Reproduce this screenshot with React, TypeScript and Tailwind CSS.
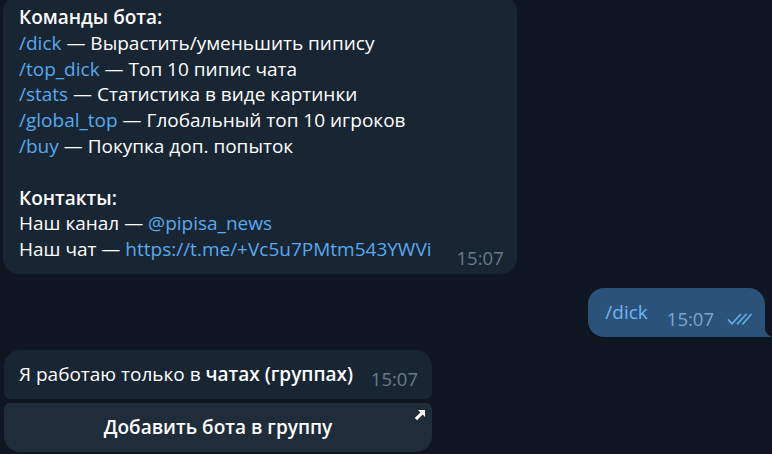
import React from 'react';

const Link = ({ children }: { children: React.ReactNode }) => (
  <span className="text-[#5aa9ec]">{children}</span>
);

const Time = ({ out = false }: { out?: boolean }) => (
  <span className={`block text-[18.5px] leading-[18px] ${out ? 'text-[#7ea6cf]' : 'text-[#6a7b8c]'}`}>15:07</span>
);

const Checks = () => (
  <svg width="25" height="12" viewBox="0 0 25 12" fill="none" stroke="#62aef0" strokeWidth="1.7" strokeLinecap="round" strokeLinejoin="round">
    <path d="M1.5 7 L5 10.8 L13.5 1.5" />
    <path d="M10.5 10.8 L19 1.5" />
    <path d="M16 10.8 L24 1.5" />
  </svg>
);

const App = () => {
  return (
    <div
      className="w-[772px] h-[454px] overflow-hidden bg-[#0e1621] text-white"
      style={{ fontFamily: '"Open Sans", "Noto Sans", sans-serif' }}
    >
      <div className="flex flex-col">
        {/* bot help message */}
        <div className="ml-[3px] mt-[-5px] flex w-fit items-end rounded-2xl bg-[#182533] pt-[10px] pb-[7px] pl-[16px] pr-[13px]">
          <div className="text-[19px] leading-[25.8px] pb-[4px] whitespace-nowrap">
            <div className="font-semibold">Команды бота:</div>
            <div><Link>/dick</Link> — Вырастить/уменьшить пипису</div>
            <div><Link>/top_dick</Link> — Топ 10 пипис чата</div>
            <div><Link>/stats</Link> — Статистика в виде картинки</div>
            <div><Link>/global_top</Link> — Глобальный топ 10 игроков</div>
            <div><Link>/buy</Link> — Покупка доп. попыток</div>
            <div>&nbsp;</div>
            <div className="font-semibold">Контакты:</div>
            <div>Наш канал — <Link>@pipisa_news</Link></div>
            <div>Наш чат — <Link>https://t.me/+Vc5u7PMtm543YWVi</Link></div>
          </div>
          <div className="ml-[25px]"><Time /></div>
        </div>

        {/* outgoing */}
        <div className="mt-[14px] flex justify-end pr-[7px]">
          <div className="relative flex h-[49px] items-center rounded-2xl rounded-br-none bg-[#2b5278] pl-[17px] pr-[13px]">
            <span className="text-[19px] leading-[24px] text-[#6fb5f3] -mt-[1px]">/dick</span>
            <span className="ml-[19px] mt-[13px]"><Time out /></span>
            <span className="ml-[13px] mt-[13px]"><Checks /></span>
            <svg className="absolute bottom-0 right-[-7px]" width="8" height="14" viewBox="0 0 8 14">
              <path d="M0 0 C0 8 3 12 8 14 L0 14 Z" fill="#2b5278" />
            </svg>
          </div>
        </div>

        {/* reply + inline button */}
        <div className="mt-[13px] ml-[4px] flex w-[428px] flex-col gap-[4px]">
          <div className="flex h-[49px] items-center rounded-t-2xl rounded-b-[6px] bg-[#182533] pl-[15px] pr-[14px]">
            <span className="text-[19px] leading-[24px]">
              Я работаю только в <span className="font-semibold">чатах (группах)</span>
            </span>
            <span className="ml-auto mt-[10px]"><Time /></span>
          </div>
          <div className="relative flex h-[49px] items-center justify-center rounded-t-[6px] rounded-b-2xl bg-[#1f2c3a]">
            <span className="text-[19px] font-semibold leading-[24px]">Добавить бота в группу</span>
            <svg className="absolute right-[6px] top-[6px]" width="12" height="12" viewBox="0 0 12 12" fill="white">
              <path d="M4 1 H11 V8 L8.6 5.6 L3 11.2 L0.8 9 L6.4 3.4 Z" />
            </svg>
          </div>
        </div>
      </div>
    </div>
  );
};

export default App;
